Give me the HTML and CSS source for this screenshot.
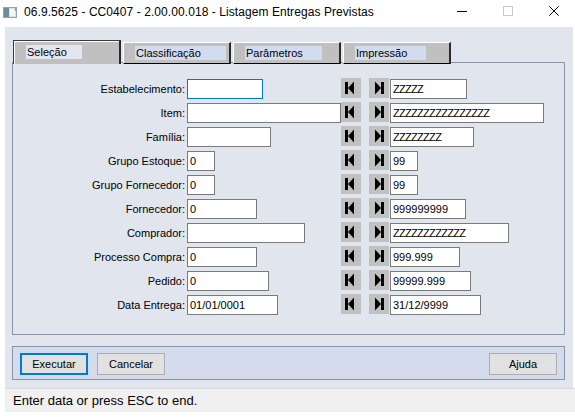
FILE: index.html
```html
<!DOCTYPE html>
<html>
<head>
<meta charset="utf-8">
<link rel="stylesheet" href="styles.css">
</head>
<body>
<div class="titlebar">
  <svg class="appicon" width="14" height="11" viewBox="0 0 14 11">
    <rect x="0.5" y="0.5" width="13" height="10" fill="#dfe3e0" stroke="#9aa2a0"/>
    <rect x="1" y="1" width="5" height="9" fill="#6c8f96"/>
    <rect x="7" y="2" width="5" height="7" fill="#f4f6f4"/>
    <rect x="12" y="1" width="1" height="3" fill="#7aa88a"/>
  </svg>
  <span class="title">06.9.5625 - CC0407 - 2.00.00.018 - Listagem Entregas Previstas</span>
  <div class="controls">
    <div class="ctl"><svg width="10" height="10" viewBox="0 0 10 10"><rect x="0" y="5" width="10" height="1" fill="#000"/></svg></div>
    <div class="ctl"><svg width="10" height="10" viewBox="0 0 10 10"><rect x="0.5" y="0.5" width="9" height="9" fill="none" stroke="#c8c8c8"/></svg></div>
    <div class="ctl"><svg width="10" height="10" viewBox="0 0 10 10"><path d="M0.3 0.3 L9.7 9.7 M9.7 0.3 L0.3 9.7" stroke="#000" stroke-width="1"/></svg></div>
  </div>
</div>
<div class="client">
  <div class="tabs">
    <div class="tab active"><span class="tab-label w-sel">Seleção</span></div>
    <div class="tab"><span class="tab-label w-cla">Classificação</span></div>
    <div class="tab"><span class="tab-label w-par">Parâmetros</span></div>
    <div class="tab"><span class="tab-label w-imp">Impressão</span></div>
  </div>
  <div class="panel">
    <div class="row">
      <span class="lbl">Estabelecimento:</span>
      <div class="slot"><div class="fld focus i76"></div></div>
      <div class="nav first"><svg width="20" height="20" viewBox="0 0 20 20"><rect x="4" y="4" width="3" height="12"/><polygon points="7,10 13,3.5 13,16.5"/></svg></div>
      <div class="nav last"><svg width="20" height="20" viewBox="0 0 20 20"><polygon points="6,3.5 6,16.5 12,10"/><rect x="12" y="4" width="3" height="12"/></svg></div>
      <div class="fld to z i77">ZZZZZ</div>
    </div>
    <div class="row">
      <span class="lbl">Item:</span>
      <div class="slot"><div class="fld i154"></div></div>
      <div class="nav first"><svg width="20" height="20" viewBox="0 0 20 20"><rect x="4" y="4" width="3" height="12"/><polygon points="7,10 13,3.5 13,16.5"/></svg></div>
      <div class="nav last"><svg width="20" height="20" viewBox="0 0 20 20"><polygon points="6,3.5 6,16.5 12,10"/><rect x="12" y="4" width="3" height="12"/></svg></div>
      <div class="fld to z i154">ZZZZZZZZZZZZZZZZ</div>
    </div>
    <div class="row">
      <span class="lbl">Família:</span>
      <div class="slot"><div class="fld i84"></div></div>
      <div class="nav first"><svg width="20" height="20" viewBox="0 0 20 20"><rect x="4" y="4" width="3" height="12"/><polygon points="7,10 13,3.5 13,16.5"/></svg></div>
      <div class="nav last"><svg width="20" height="20" viewBox="0 0 20 20"><polygon points="6,3.5 6,16.5 12,10"/><rect x="12" y="4" width="3" height="12"/></svg></div>
      <div class="fld to z i84">ZZZZZZZZ</div>
    </div>
    <div class="row">
      <span class="lbl">Grupo Estoque:</span>
      <div class="slot"><div class="fld i28">0</div></div>
      <div class="nav first"><svg width="20" height="20" viewBox="0 0 20 20"><rect x="4" y="4" width="3" height="12"/><polygon points="7,10 13,3.5 13,16.5"/></svg></div>
      <div class="nav last"><svg width="20" height="20" viewBox="0 0 20 20"><polygon points="6,3.5 6,16.5 12,10"/><rect x="12" y="4" width="3" height="12"/></svg></div>
      <div class="fld to i28">99</div>
    </div>
    <div class="row">
      <span class="lbl">Grupo Fornecedor:</span>
      <div class="slot"><div class="fld i28">0</div></div>
      <div class="nav first"><svg width="20" height="20" viewBox="0 0 20 20"><rect x="4" y="4" width="3" height="12"/><polygon points="7,10 13,3.5 13,16.5"/></svg></div>
      <div class="nav last"><svg width="20" height="20" viewBox="0 0 20 20"><polygon points="6,3.5 6,16.5 12,10"/><rect x="12" y="4" width="3" height="12"/></svg></div>
      <div class="fld to i28">99</div>
    </div>
    <div class="row">
      <span class="lbl">Fornecedor:</span>
      <div class="slot"><div class="fld i70">0</div></div>
      <div class="nav first"><svg width="20" height="20" viewBox="0 0 20 20"><rect x="4" y="4" width="3" height="12"/><polygon points="7,10 13,3.5 13,16.5"/></svg></div>
      <div class="nav last"><svg width="20" height="20" viewBox="0 0 20 20"><polygon points="6,3.5 6,16.5 12,10"/><rect x="12" y="4" width="3" height="12"/></svg></div>
      <div class="fld to i76">999999999</div>
    </div>
    <div class="row">
      <span class="lbl">Comprador:</span>
      <div class="slot"><div class="fld i118"></div></div>
      <div class="nav first"><svg width="20" height="20" viewBox="0 0 20 20"><rect x="4" y="4" width="3" height="12"/><polygon points="7,10 13,3.5 13,16.5"/></svg></div>
      <div class="nav last"><svg width="20" height="20" viewBox="0 0 20 20"><polygon points="6,3.5 6,16.5 12,10"/><rect x="12" y="4" width="3" height="12"/></svg></div>
      <div class="fld to z i119">ZZZZZZZZZZZZ</div>
    </div>
    <div class="row">
      <span class="lbl">Processo Compra:</span>
      <div class="slot"><div class="fld i70">0</div></div>
      <div class="nav first"><svg width="20" height="20" viewBox="0 0 20 20"><rect x="4" y="4" width="3" height="12"/><polygon points="7,10 13,3.5 13,16.5"/></svg></div>
      <div class="nav last"><svg width="20" height="20" viewBox="0 0 20 20"><polygon points="6,3.5 6,16.5 12,10"/><rect x="12" y="4" width="3" height="12"/></svg></div>
      <div class="fld to i70">999.999</div>
    </div>
    <div class="row">
      <span class="lbl">Pedido:</span>
      <div class="slot"><div class="fld i82">0</div></div>
      <div class="nav first"><svg width="20" height="20" viewBox="0 0 20 20"><rect x="4" y="4" width="3" height="12"/><polygon points="7,10 13,3.5 13,16.5"/></svg></div>
      <div class="nav last"><svg width="20" height="20" viewBox="0 0 20 20"><polygon points="6,3.5 6,16.5 12,10"/><rect x="12" y="4" width="3" height="12"/></svg></div>
      <div class="fld to i81">99999.999</div>
    </div>
    <div class="row">
      <span class="lbl">Data Entrega:</span>
      <div class="slot"><div class="fld i91">01/01/0001</div></div>
      <div class="nav first"><svg width="20" height="20" viewBox="0 0 20 20"><rect x="4" y="4" width="3" height="12"/><polygon points="7,10 13,3.5 13,16.5"/></svg></div>
      <div class="nav last"><svg width="20" height="20" viewBox="0 0 20 20"><polygon points="6,3.5 6,16.5 12,10"/><rect x="12" y="4" width="3" height="12"/></svg></div>
      <div class="fld to i91">31/12/9999</div>
    </div>
  </div>
  <div class="buttonbar">
    <div class="btn default">Executar</div>
    <div class="btn cancel">Cancelar</div>
    <div class="btn help">Ajuda</div>
  </div>
</div>
<div class="status">Enter data or press ESC to end.</div>
</body>
</html>
```
FILE: styles.css
```css
html, body {
  margin: 0;
  padding: 0;
}
body {
  width: 575px;
  height: 417px;
  background: #ffffff;
  font-family: "Liberation Sans", Arial, sans-serif;
  color: #000;
  overflow: hidden;
}
.titlebar {
  height: 27px;
  display: flex;
  align-items: center;
}
.appicon {
  margin-left: 3px;
  margin-right: 7px;
  margin-top: -2px;
  flex: none;
}
.title {
  font-size: 12px;
  letter-spacing: 0.07px;
  margin-top: -3px;
  white-space: nowrap;
}
.controls {
  margin-left: auto;
  margin-right: -2px;
  display: flex;
  align-self: stretch;
}
.ctl {
  width: 46px;
  display: flex;
  align-items: center;
  justify-content: center;
  margin-top: -5px;
}
.client {
  margin-left: 5px;
  width: 568px;
  height: 361px;
  box-sizing: border-box;
  padding-top: 13px;
  background: #e1e5ee;
}
.tabs {
  display: flex;
  align-items: flex-end;
  gap: 2px;
  height: 24px;
  margin-left: 8px;
  margin-bottom: -2px;
  position: relative;
  z-index: 1;
}
.tab {
  width: 108px;
  height: 22px;
  box-sizing: border-box;
  background: #c0c0c0;
  border-top: 1px solid #ffffff;
  border-left: 1px solid #ffffff;
  border-right: 2px solid #2a2a2a;
  border-bottom: 1px solid #000;
  padding-top: 3px;
  padding-left: 11px;
}
.tab.active {
  height: 24px;
  border-bottom: none;
  border-top: 1px solid #3a3a3a;
  border-left: 1px solid #3a3a3a;
  box-shadow: inset 1px 1px 0 #ffffff;
  padding-top: 4px;
  padding-left: 12px;
}
.tab-label {
  display: block;
  height: 14px;
  line-height: 14px;
  font-size: 11px;
  padding-left: 1px;
  background: #d3dcee;
  box-sizing: border-box;
  white-space: nowrap;
}
.tab.active .tab-label {
  background: #e3e6ee;
}
.w-sel { width: 56px; }
.w-cla { width: 91px; }
.w-par { width: 77px; }
.w-imp { width: 71px; }

.panel {
  margin-left: 7px;
  width: 553px;
  height: 273px;
  box-sizing: border-box;
  border: 1px solid #8b93a6;
  padding-top: 16px;
}
.row {
  display: flex;
  align-items: center;
  height: 20px;
  margin-bottom: 4px;
}
.lbl {
  width: 172px;
  margin-right: 2px;
  text-align: right;
  font-size: 11px;
  white-space: nowrap;
}
.slot {
  width: 154px;
  flex: none;
}
.fld {
  height: 20px;
  box-sizing: border-box;
  border: 1px solid #7a7a7a;
  background: #ffffff;
  font-size: 11px;
  line-height: 18px;
  padding-left: 2px;
  white-space: nowrap;
  overflow: hidden;
  flex: none;
}
.fld.z {
  letter-spacing: -0.7px;
}
.fld.focus {
  border-color: #0078d7;
}
.fld.to {
  margin-left: 1px;
}
.i28 { width: 28px; }
.i70 { width: 70px; }
.i76 { width: 76px; }
.i77 { width: 77px; }
.i81 { width: 81px; }
.i82 { width: 82px; }
.i84 { width: 84px; }
.i91 { width: 91px; }
.i118 { width: 118px; }
.i119 { width: 119px; }
.i154 { width: 154px; }
.nav {
  width: 20px;
  height: 20px;
  background: #c0c0c0;
  flex: none;
  margin-top: -2px;
}
.nav svg {
  display: block;
  fill: #000;
}
.nav.last {
  margin-left: 8px;
}

.buttonbar {
  margin-top: 11px;
  margin-left: 7px;
  width: 553px;
  height: 34px;
  box-sizing: border-box;
  border: 1px solid #8b93a6;
  background: #d3dbec;
  display: flex;
  align-items: flex-start;
  padding: 6px 7px 0 7px;
}
.btn {
  width: 68px;
  height: 22px;
  box-sizing: border-box;
  background: #e1e1e1;
  border: 1px solid #adadad;
  font-size: 11px;
  display: flex;
  align-items: center;
  justify-content: center;
}
.btn.default {
  border: 2px solid #0078d7;
}
.btn.cancel {
  margin-left: 9px;
}
.btn.help {
  margin-left: auto;
}
.status {
  margin-left: 5px;
  height: 24px;
  box-sizing: border-box;
  background: #f0f0f0;
  border-top: 1px solid #dadada;
  font-size: 13px;
  line-height: 23px;
  padding-left: 8px;
}
```
